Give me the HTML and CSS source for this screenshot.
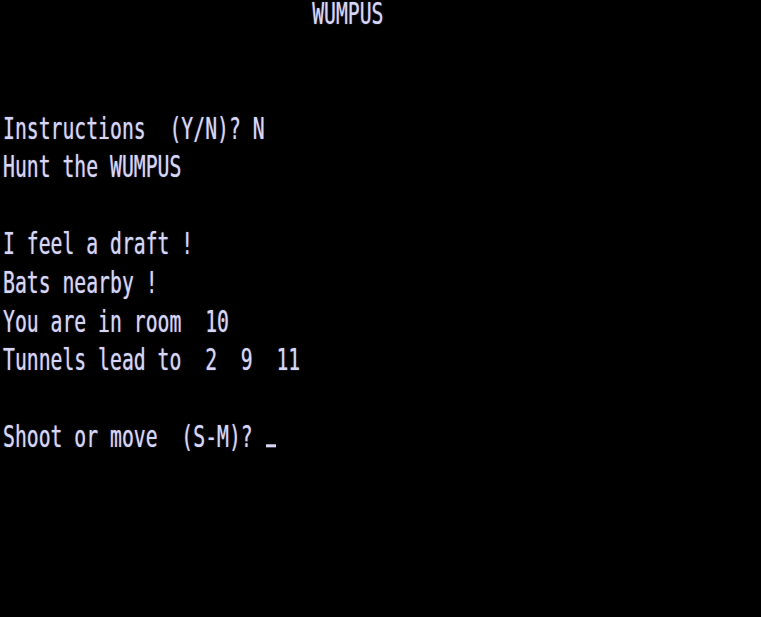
FILE: index.html
```html
<!DOCTYPE html>
<html>
<head>
<meta charset="utf-8">
<title>WUMPUS</title>
<link rel="stylesheet" href="styles.css">
</head>
<body>
<div class="screen">
  <div class="row"><span class="txt title">WUMPUS</span></div>
  <div class="row"></div>
  <div class="row"></div>
  <div class="row"><span class="txt">Instructions  (Y/N)? N</span></div>
  <div class="row"><span class="txt">Hunt the WUMPUS</span></div>
  <div class="row"></div>
  <div class="row"><span class="txt">I feel a draft !</span></div>
  <div class="row"><span class="txt">Bats nearby !</span></div>
  <div class="row"><span class="txt">You are in room  10</span></div>
  <div class="row"><span class="txt">Tunnels lead to  2  9  11</span></div>
  <div class="row"></div>
  <div class="row"><span class="txt">Shoot or move  (S-M)? <span class="cursor"></span></span></div>
  <div class="row"></div>
  <div class="row"></div>
  <div class="row"></div>
  <div class="row"></div>
</div>
</body>
</html>
```

FILE: styles.css
```css
html, body {
  margin: 0;
  padding: 0;
  background: #000;
}
.screen {
  width: 761px;
  height: 617px;
  display: grid;
  grid-template-rows: repeat(16, 1fr);
  overflow: hidden;
  font-family: "DejaVu Sans Mono", monospace;
  font-size: 19.75px;
  color: #d6d6f6;
  text-shadow: 0 0 1px rgba(200, 200, 255, 0.6);
}
.row {
  white-space: pre;
  padding-left: 3px;
}
.txt {
  display: block;
  line-height: 1;
  transform-origin: 0 0;
  transform: scaleY(1.52);
  margin-top: -1px;
}
.title {
  padding-left: 26ch;
  margin-top: 0;
}
.cursor {
  display: inline-block;
  width: 10px;
  height: 2px;
  background: #d6d6f6;
  vertical-align: baseline;
  margin-left: 1px;
}
```
